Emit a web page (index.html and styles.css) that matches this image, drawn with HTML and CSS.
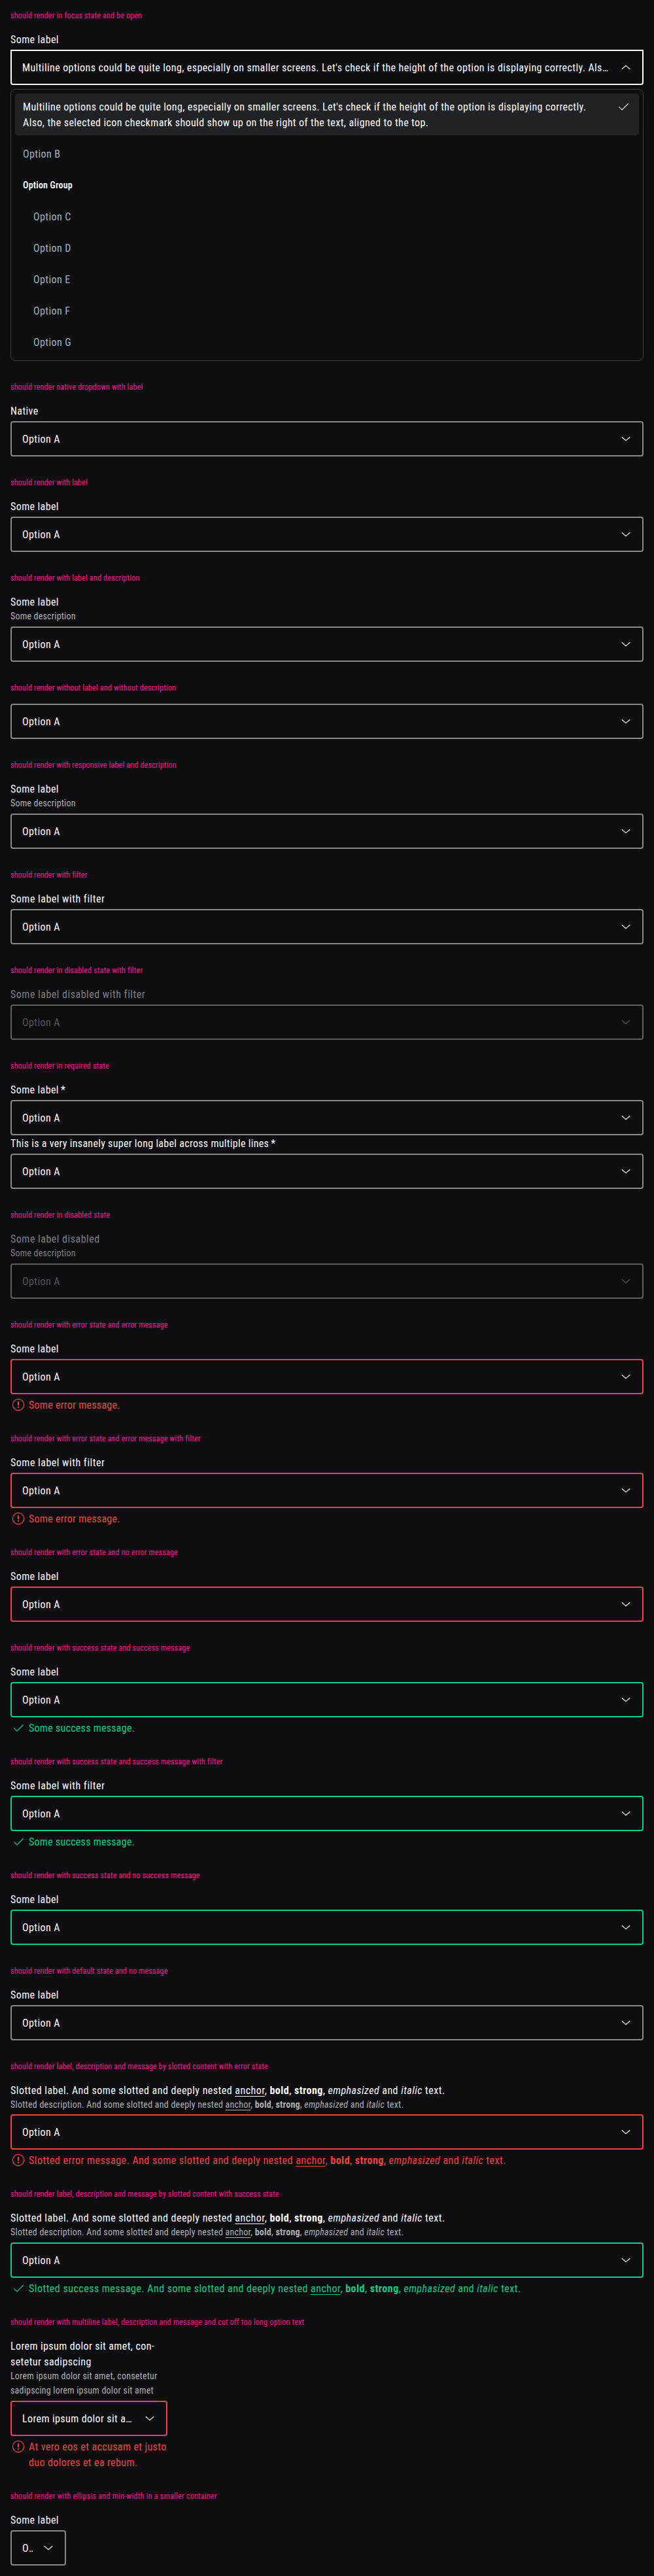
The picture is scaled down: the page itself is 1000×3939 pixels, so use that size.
FILE: index.html
```
<!DOCTYPE html>
<html lang="en">
<head>
<meta charset="utf-8">
<title>Select wrapper states</title>
<link rel="stylesheet" href="styles.css">
</head>
<body>
<svg class="sprite" aria-hidden="true">
  <symbol id="down" viewBox="0 0 24 24"><path d="M5.8 9.2 12 14.8l6.2-5.6"/></symbol>
  <symbol id="up" viewBox="0 0 24 24"><path d="M5.8 14.8 12 9.2l6.2 5.6"/></symbol>
  <symbol id="check" viewBox="0 0 24 24"><path d="M5.4 12.4 10 16.9 19.8 7.3"/></symbol>
  <symbol id="error" viewBox="0 0 24 24"><circle cx="12" cy="12" r="8.6"/><path class="mark" d="M12 7.2v6M12 14.8v2"/></symbol>
</svg>
<main class="page">
  <section>
    <h2>should render in focus state and be open</h2>
    <div class="field">
      <div class="label">Some label</div>
      <div class="select open"><span class="value">Multiline options could be quite long, especially on smaller screens. Let's check if the height of the option is displaying correctly. Also, the selected icon checkmark should show up on the right of the text, aligned to the top.</span><svg class="icon"><use href="#up"/></svg></div>
      <div class="list">
        <div class="option selected"><span>Multiline options could be quite long, especially on smaller screens. Let's check if the height of the option is displaying correctly.<br>Also, the selected icon checkmark should show up on the right of the text, aligned to the top.</span><svg class="icon"><use href="#check"/></svg></div>
        <div class="option"><span>Option B</span></div>
        <div class="group">Option Group</div>
        <div class="option nested"><span>Option C</span></div>
        <div class="option nested"><span>Option D</span></div>
        <div class="option nested"><span>Option E</span></div>
        <div class="option nested"><span>Option F</span></div>
        <div class="option nested"><span>Option G</span></div>
      </div>
    </div>
  </section>
  <section>
    <h2>should render native dropdown with label</h2>
    <div class="field"><div class="label">Native</div><div class="select"><span class="value">Option A</span><svg class="icon"><use href="#down"/></svg></div></div>
  </section>
  <section>
    <h2>should render with label</h2>
    <div class="field"><div class="label">Some label</div><div class="select"><span class="value">Option A</span><svg class="icon"><use href="#down"/></svg></div></div>
  </section>
  <section>
    <h2>should render with label and description</h2>
    <div class="field"><div class="label">Some label</div><div class="description">Some description</div><div class="select"><span class="value">Option A</span><svg class="icon"><use href="#down"/></svg></div></div>
  </section>
  <section>
    <h2>should render without label and without description</h2>
    <div class="field"><div class="select"><span class="value">Option A</span><svg class="icon"><use href="#down"/></svg></div></div>
  </section>
  <section>
    <h2>should render with responsive label and description</h2>
    <div class="field"><div class="label">Some label</div><div class="description">Some description</div><div class="select"><span class="value">Option A</span><svg class="icon"><use href="#down"/></svg></div></div>
  </section>
  <section>
    <h2>should render with filter</h2>
    <div class="field"><div class="label filter">Some label with filter</div><div class="select"><span class="value">Option A</span><svg class="icon"><use href="#down"/></svg></div></div>
  </section>
  <section>
    <h2>should render in disabled state with filter</h2>
    <div class="field disabled"><div class="label filter">Some label disabled with filter</div><div class="select"><span class="value">Option A</span><svg class="icon"><use href="#down"/></svg></div></div>
  </section>
  <section>
    <h2>should render in required state</h2>
    <div class="field"><div class="label">Some label<span class="required">*</span></div><div class="select"><span class="value">Option A</span><svg class="icon"><use href="#down"/></svg></div></div>
    <div class="field"><div class="label long">This is a very insanely super long label across multiple lines<span class="required">*</span></div><div class="select"><span class="value">Option A</span><svg class="icon"><use href="#down"/></svg></div></div>
  </section>
  <section>
    <h2>should render in disabled state</h2>
    <div class="field disabled"><div class="label filter">Some label disabled</div><div class="description">Some description</div><div class="select"><span class="value">Option A</span><svg class="icon"><use href="#down"/></svg></div></div>
  </section>
  <section>
    <h2>should render with error state and error message</h2>
    <div class="field error"><div class="label">Some label</div><div class="select"><span class="value">Option A</span><svg class="icon"><use href="#down"/></svg></div><div class="message"><svg class="icon"><use href="#error"/></svg><span>Some error message.</span></div></div>
  </section>
  <section>
    <h2>should render with error state and error message with filter</h2>
    <div class="field error"><div class="label filter">Some label with filter</div><div class="select"><span class="value">Option A</span><svg class="icon"><use href="#down"/></svg></div><div class="message"><svg class="icon"><use href="#error"/></svg><span>Some error message.</span></div></div>
  </section>
  <section>
    <h2>should render with error state and no error message</h2>
    <div class="field error"><div class="label">Some label</div><div class="select"><span class="value">Option A</span><svg class="icon"><use href="#down"/></svg></div></div>
  </section>
  <section>
    <h2>should render with success state and success message</h2>
    <div class="field success"><div class="label">Some label</div><div class="select"><span class="value">Option A</span><svg class="icon"><use href="#down"/></svg></div><div class="message"><svg class="icon"><use href="#check"/></svg><span>Some success message.</span></div></div>
  </section>
  <section>
    <h2>should render with success state and success message with filter</h2>
    <div class="field success"><div class="label filter">Some label with filter</div><div class="select"><span class="value">Option A</span><svg class="icon"><use href="#down"/></svg></div><div class="message"><svg class="icon"><use href="#check"/></svg><span>Some success message.</span></div></div>
  </section>
  <section>
    <h2>should render with success state and no success message</h2>
    <div class="field success"><div class="label">Some label</div><div class="select"><span class="value">Option A</span><svg class="icon"><use href="#down"/></svg></div></div>
  </section>
  <section>
    <h2>should render with default state and no message</h2>
    <div class="field"><div class="label">Some label</div><div class="select"><span class="value">Option A</span><svg class="icon"><use href="#down"/></svg></div></div>
  </section>
  <section class="slotted tight">
    <h2>should render label, description and message by slotted content with error state</h2>
    <div class="field error"><div class="label">Slotted label. And some slotted and deeply nested <a>anchor</a>, <b>bold</b>, <strong>strong</strong>, <em>emphasized</em> and <i>italic</i> text.</div><div class="description">Slotted description. And some slotted and deeply nested <a>anchor</a>, <b>bold</b>, <strong>strong</strong>, <em>emphasized</em> and <i>italic</i> text.</div><div class="select"><span class="value">Option A</span><svg class="icon"><use href="#down"/></svg></div><div class="message"><svg class="icon"><use href="#error"/></svg><span>Slotted error message. And some slotted and deeply nested <a>anchor</a>, <b>bold</b>, <strong>strong</strong>, <em>emphasized</em> and <i>italic</i> text.</span></div></div>
  </section>
  <section class="slotted">
    <h2>should render label, description and message by slotted content with success state</h2>
    <div class="field success"><div class="label">Slotted label. And some slotted and deeply nested <a>anchor</a>, <b>bold</b>, <strong>strong</strong>, <em>emphasized</em> and <i>italic</i> text.</div><div class="description">Slotted description. And some slotted and deeply nested <a>anchor</a>, <b>bold</b>, <strong>strong</strong>, <em>emphasized</em> and <i>italic</i> text.</div><div class="select"><span class="value">Option A</span><svg class="icon"><use href="#down"/></svg></div><div class="message"><svg class="icon"><use href="#check"/></svg><span>Slotted success message. And some slotted and deeply nested <a>anchor</a>, <b>bold</b>, <strong>strong</strong>, <em>emphasized</em> and <i>italic</i> text.</span></div></div>
  </section>
  <section>
    <h2>should render with multiline label, description and message and cut off too long option text</h2>
    <div class="field error narrow"><div class="label">Lorem ipsum dolor sit amet, con-<br>setetur sadipscing</div><div class="description">Lorem ipsum dolor sit amet, consetetur<br>sadipscing lorem ipsum dolor sit amet</div><div class="select"><span class="value">Lorem ipsum dolor sit amet, consetetur sadipscing</span><svg class="icon"><use href="#down"/></svg></div><div class="message"><svg class="icon"><use href="#error"/></svg><span>At vero eos et accusam et justo<br>duo dolores et ea rebum.</span></div></div>
  </section>
  <section>
    <h2 class="wide">should render with ellipsis and min-width in a smaller container</h2>
    <div class="field tiny"><div class="label">Some label</div><div class="select"><span class="value">Option A</span><svg class="icon"><use href="#down"/></svg></div></div>
  </section>
</main>
</body>
</html>
```
FILE: styles.css
```
* { box-sizing: border-box; }

body {
  margin: 0;
  background: #0e0e12;
  color: #fbfcff;
  font: 16px/24px "Roboto Condensed", Roboto, sans-serif;
  letter-spacing: 0.4px;
}

.sprite { display: block; width: 0; height: 0; }

.page {
  display: flex;
  flex-direction: column;
  gap: 32px;
  padding: 16px;
}

h2 {
  margin: 0 0 16px;
  color: #ff1493;
  font-size: 12px;
  font-weight: 400;
  line-height: 16px;
  letter-spacing: 0.21px;
}
h2.wide { letter-spacing: 0.28px; }

.field { display: flex; flex-direction: column; }
.narrow { width: 240px; }
.tiny { width: 85px; }

/* nudges the 16px text one pixel down inside its 24px line */
.label, .option > span, .message > span {
  padding-top: 1px;
  margin-bottom: -1px;
}

.label { white-space: nowrap; }
.label.filter { letter-spacing: 0.5px; }
.label.long { letter-spacing: 0.3px; }
.required { margin-left: 3px; }

.description {
  margin-top: -1px;
  padding-bottom: 1px;
  color: #afb0b3;
  font-size: 14px;
  line-height: 22px;
  letter-spacing: 0.2px;
  white-space: nowrap;
}
.label + .description { margin-top: 0; line-height: 22px; padding-bottom: 0; }
.label:has(+ .description) { margin-bottom: -2px; }
.label + .description + .select { margin-top: 5px; }

.label + .select { margin-top: 4px; }

.select {
  display: flex;
  align-items: center;
  gap: 12px;
  height: 54px;
  padding: 0 13px 0 16px;
  border: 2px solid #88898c;
  border-radius: 4px;
}

.value {
  flex: 1;
  min-width: 0;
  padding-top: 2px;
  overflow: hidden;
  text-overflow: ellipsis;
  white-space: nowrap;
}

.icon {
  flex: none;
  width: 24px;
  height: 24px;
  fill: none;
  stroke: currentColor;
  stroke-width: 1.2;
}
.mark { stroke-width: 2; }

.open { border-color: #fbfcff; border-radius: 0 0 4px 4px; }

.list {
  display: flex;
  flex-direction: column;
  gap: 8px;
  margin-top: 6px;
  padding: 6px 6px 8px;
  border: 1px solid #414146;
  border-radius: 8px;
  box-shadow: 0 0 16px rgba(0, 0, 0, 0.2);
}

.option {
  display: flex;
  justify-content: space-between;
  padding: 8px 12px;
  border-radius: 4px;
  color: #afb0b3;
}
.selected { background: #212225; color: #fbfcff; white-space: nowrap; }
.nested { padding-left: 28px; }

.group {
  padding: 8px 12px;
  font-size: 14px;
  font-weight: 600;
  letter-spacing: 0.2px;
}

.message {
  display: flex;
  gap: 4px;
  margin-top: 4px;
  letter-spacing: 0.27px;
  white-space: nowrap;
}
.narrow .message { letter-spacing: 0.39px; }

.error .select { border-color: #fc4040; }
.error .message { color: #fc4040; }
.success .select { border-color: #09d087; }
.success .message { color: #09d087; }

.disabled .label, .disabled .description { color: #7e7f82; }
.disabled .select { border-color: #5e5f63; color: #535457; }

.slotted a { text-decoration: underline; text-underline-offset: 3px; }
.slotted .label { letter-spacing: 0.47px; }
.slotted .description { letter-spacing: 0.24px; }
.slotted .message { letter-spacing: 0.48px; }
.tight .description { height: 21px; }
```
